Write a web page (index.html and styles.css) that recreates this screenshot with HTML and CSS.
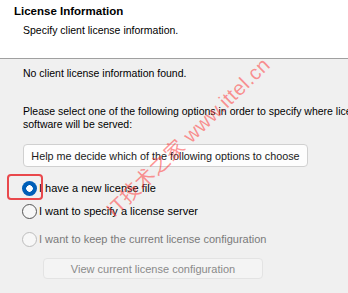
FILE: index.html
```html
<!DOCTYPE html>
<html lang="en">
<head>
  <meta charset="UTF-8" />
  <title>License Information</title>
  <link rel="stylesheet" href="styles.css">
</head>
<body>

<header class="page-head">
  <h1 class="head-title">License Information</h1>
  <p class="head-sub">Specify client license information.</p>
</header>

<main class="content">
  <p class="status">No client license information found.</p>

  <p class="intro">Please select one of the following options in order to specify where license<br>software will be served:</p>

  <button class="btn btn-help">Help me decide which of the following options to choose</button>

  <div class="options">
    <label class="opt opt-first">
      <span class="radio checked"></span>
      <span>I have a new license file</span>
      <span class="mark"></span>
    </label>
    <label class="opt opt-second">
      <span class="radio"></span>
      <span>I want to specify a license server</span>
    </label>
    <label class="opt opt-third disabled">
      <span class="radio"></span>
      <span>I want to keep the current license configuration</span>
    </label>
  </div>

  <button class="btn btn-view" disabled>View current license configuration</button>
</main>

<!-- watermark -->
<div class="wm">IT技术之家 www.ittel.cn</div>

</body>
</html>
```

FILE: styles.css
```css
* {
  margin: 0;
  padding: 0;
  box-sizing: border-box;
}

html, body {
  width: 348px;
  height: 293px;
  overflow: hidden;
}

body {
  background: #f0f0f0;
  color: #000;
  font-family: 'Liberation Sans', Arial, sans-serif;
  font-size: 10.5px;
  position: relative;
}

.page-head {
  height: 59px;
  background: #fff;
  border-bottom: 1px solid #a0a0a0;
  padding: 4px 0 0 14px;
}

.head-title {
  font-size: 11.5px;
  font-weight: bold;
  line-height: 14px;
}

.head-sub {
  margin: 5px 0 0 9px;
  line-height: 14px;
}

.content {
  padding: 8px 0 0 23px;
  width: 420px;
}

.status {
  line-height: 13px;
}

.intro {
  margin-top: 25px;
  line-height: 13px;
  white-space: nowrap;
}

.btn {
  display: block;
  font-family: 'Liberation Sans', Arial, sans-serif;
  font-size: 11px;
  border-radius: 4px;
  text-align: center;
  white-space: nowrap;
}

.btn-help {
  margin-top: 13px;
  width: 285px;
  height: 23px;
  font-size: 10.8px;
  background: #fdfdfd;
  border: 1px solid #d0d0d0;
  color: #1a1a1a;
}

.options {
  margin-top: 13px;
}

.opt {
  display: flex;
  align-items: center;
  gap: 2px;
  height: 16px;
  font-size: 11px;
  position: relative;
  margin-left: -1px;
}

.opt-second {
  margin-top: 7px;
}

.opt-third {
  margin-top: 12px;
}

.radio {
  width: 15px;
  height: 15px;
  border-radius: 50%;
  border: 1px solid #555;
  background: #f7f7f7;
  flex: none;
}

.radio.checked {
  border: none;
  background: radial-gradient(circle, #fff 0 3px, #005fb8 3.5px);
}

.disabled {
  color: #7a7a7a;
}

.disabled .radio {
  border-color: #bdbdbd;
}

/* red highlight round the first radio */
.mark {
  position: absolute;
  left: -15px;
  top: -6px;
  width: 36px;
  height: 26px;
  border: 2.5px solid #e9484c;
  border-radius: 4px;
}

.btn-view {
  margin: 11px 0 0 20px;
  width: 220px;
  height: 21px;
  background: #f4f4f4;
  border: 1px solid #e3e3e3;
  color: #8a8a8a;
}

.wm {
  position: absolute;
  left: 58px;
  top: 125px;
  width: 260px;
  text-align: center;
  font-family: 'Liberation Sans', 'Noto Sans CJK SC', sans-serif;
  font-size: 20px;
  line-height: 24px;
  letter-spacing: 0.5px;
  color: rgba(255, 60, 60, 0.55);
  transform: rotate(-44deg);
  white-space: nowrap;
  pointer-events: none;
}
```
